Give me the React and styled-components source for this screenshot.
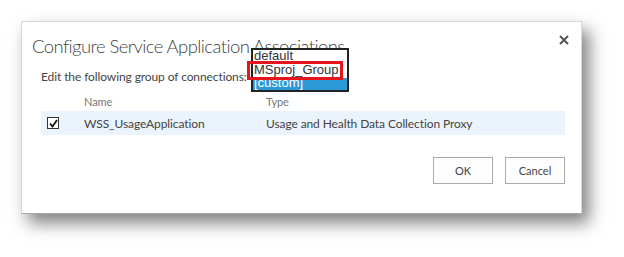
import React from 'react';
import styled, { createGlobalStyle } from 'styled-components';

const GlobalStyle = createGlobalStyle`
  html, body {
    margin: 0;
    background: #fff;
  }
  body {
    font-family: Lato, "Liberation Sans", sans-serif;
  }
`;

const Page = styled.div`
  width: 624px;
  height: 257px;
  padding: 21px 0 0 21px;
  box-sizing: border-box;
`;

const Dialog = styled.div`
  position: relative;
  width: 561px;
  height: 193px;
  box-sizing: border-box;
  background: #fff;
  border: 1px solid #d8d8d8;
  border-bottom-color: #a8a8a8;
  box-shadow: 7px 9px 16px rgba(0, 0, 0, 0.5);
  display: flex;
  flex-direction: column;
`;

const Header = styled.div`
  display: flex;
  justify-content: space-between;
  align-items: flex-start;
  padding: 12px 12px 0 10px;
`;

const Title = styled.h1`
  margin: 0;
  font-family: Lato, sans-serif;
  font-weight: 300;
  font-size: 18.5px;
  line-height: 24px;
  letter-spacing: -0.6px;
  color: #444;
`;

const Close = styled.button`
  border: none;
  background: none;
  padding: 0;
  margin-top: 1px;
  width: 10px;
  height: 10px;
  display: flex;
  cursor: pointer;
`;

const Body = styled.div`
  padding: 11px 16px 0 19px;
`;

const Prompt = styled.p`
  margin: 0;
  font-size: 12px;
  line-height: 16px;
  letter-spacing: -0.1px;
  color: #444;
`;

const Table = styled.div`
  margin-top: 6px;
`;

const Row = styled.div`
  display: grid;
  grid-template-columns: 43px 182px 1fr;
  align-items: center;
  height: ${p => (p.$head ? '20px' : '24px')};
  background: ${p => (p.$head ? 'transparent' : '#ebf3fc')};
  color: ${p => (p.$head ? '#777' : '#444')};
  font-size: ${p => (p.$head ? '11px' : '12px')};
  letter-spacing: -0.1px;
`;

const Check = styled.span`
  margin-left: 6px;
  width: 12px;
  height: 12px;
  box-sizing: border-box;
  border: 1px solid #333;
  background: #fff;
  display: flex;
  align-items: center;
  justify-content: center;
`;

const Footer = styled.div`
  display: flex;
  justify-content: flex-end;
  gap: 12px;
  padding: 22px 16px 0 0;
`;

const Button = styled.button`
  width: 60px;
  height: 27px;
  box-sizing: border-box;
  border: 1px solid #ababab;
  background: #fdfdfd;
  font-family: Lato, sans-serif;
  font-size: 11px;
  color: #444;
  padding: 0;
`;

const ListBox = styled.div`
  position: absolute;
  left: 229px;
  top: 26px;
  width: 98px;
  height: 44px;
  box-sizing: border-box;
  border: 2px solid #222;
  background: #fff;
  font-family: "Liberation Sans", Arial, sans-serif;
  font-size: 13px;
`;

const Option = styled.div`
  height: ${p => (p.$selected ? '12px' : '14px')};
  line-height: ${p => (p.$selected ? '10px' : '12px')};
  padding-left: 1px;
  color: ${p => (p.$selected ? '#fff' : '#333')};
  background: ${p => (p.$selected ? '#2b9ad6' : 'transparent')};
  overflow: hidden;
  white-space: nowrap;
`;

const Highlight = styled.div`
  position: absolute;
  left: -6px;
  top: 11px;
  width: 96px;
  height: 19px;
  box-sizing: border-box;
  border: 3px solid #e8141c;
`;

export default function App() {
  return (
    <>
      <GlobalStyle />
      <Page>
        <Dialog>
          <Header>
            <Title>Configure Service Application Associations</Title>
            <Close aria-label="Close">
              <svg width="10" height="10" viewBox="0 0 10 10">
                <path d="M1 1L9 9M9 1L1 9" stroke="#555" strokeWidth="2" />
              </svg>
            </Close>
          </Header>
          <Body>
            <Prompt>Edit the following group of connections:</Prompt>
            <Table>
              <Row $head>
                <span />
                <span>Name</span>
                <span>Type</span>
              </Row>
              <Row>
                <Check>
                  <svg width="9" height="9" viewBox="0 0 9 9">
                    <path d="M1 4.5L3.5 7.5L8 1" fill="none" stroke="#111" strokeWidth="1.8" />
                  </svg>
                </Check>
                <span>WSS_UsageApplication</span>
                <span>Usage and Health Data Collection Proxy</span>
              </Row>
            </Table>
          </Body>
          <Footer>
            <Button>OK</Button>
            <Button>Cancel</Button>
          </Footer>
          <ListBox>
            <Option>default</Option>
            <Option>MSproj_Group</Option>
            <Option $selected>[custom]</Option>
            <Highlight />
          </ListBox>
        </Dialog>
      </Page>
    </>
  );
}
